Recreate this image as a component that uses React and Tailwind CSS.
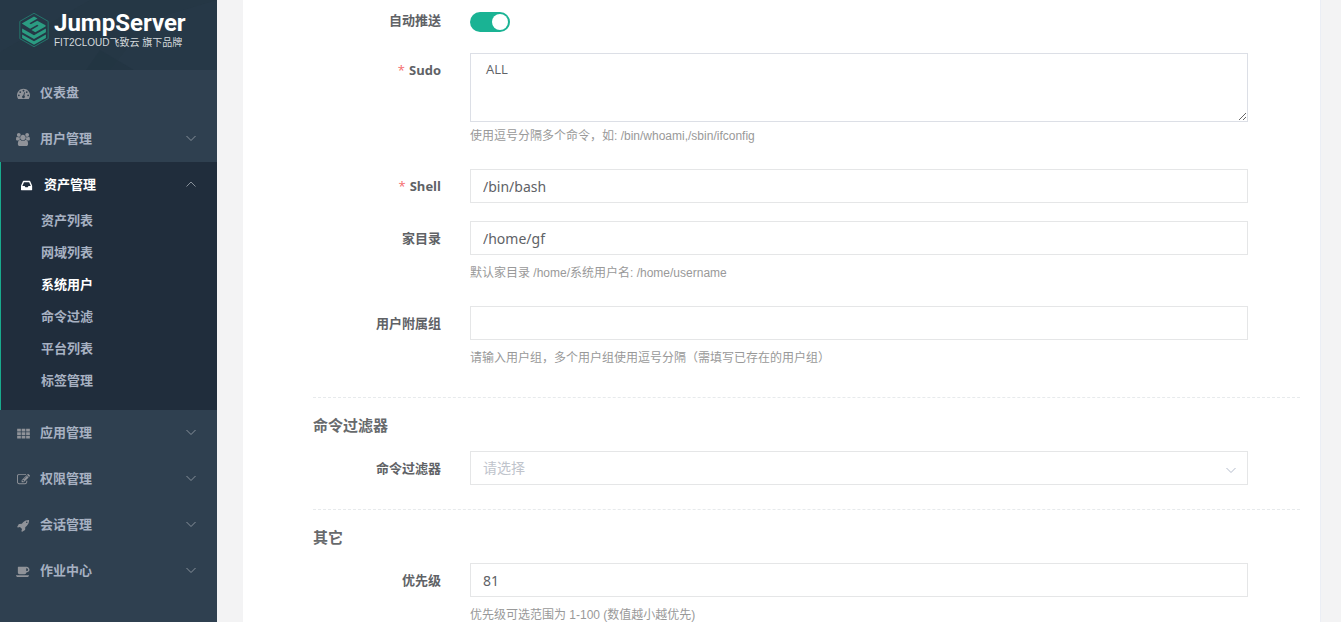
import React, { useState } from 'react';
import clsx from 'clsx';

const ICONS = {
    dashboard: {
        width: 1792,
        path: 'M384 1152q0-53-37.5-90.5t-90.5-37.5-90.5 37.5-37.5 90.5 37.5 90.5 90.5 37.5 90.5-37.5 37.5-90.5zm192-448q0-53-37.5-90.5t-90.5-37.5-90.5 37.5-37.5 90.5 37.5 90.5 90.5 37.5 90.5-37.5 37.5-90.5zm428 481l101-382q6-26-7.5-48.5t-38.5-29.5-48 6.5-30 39.5l-101 382q-60 5-107 43.5t-63 98.5q-20 77 20 146t117 89 146-20 89-117q16-60-6-117t-72-91zm660-33q0-53-37.5-90.5t-90.5-37.5-90.5 37.5-37.5 90.5 37.5 90.5 90.5 37.5 90.5-37.5 37.5-90.5zm-640-640q0-53-37.5-90.5t-90.5-37.5-90.5 37.5-37.5 90.5 37.5 90.5 90.5 37.5 90.5-37.5 37.5-90.5zm448 192q0-53-37.5-90.5t-90.5-37.5-90.5 37.5-37.5 90.5 37.5 90.5 90.5 37.5 90.5-37.5 37.5-90.5zm320 448q0 261-141 483-19 29-54 29h-1402q-35 0-54-29-141-221-141-483 0-182 71-348t191-286 286-191 348-71 348 71 286 191 191 286 71 348z',
    },
    users: {
        width: 1920,
        path: 'M593 896q-162 5-265 128h-134q-82 0-138-40.5t-56-118.5q0-353 124-353 6 0 43.5 21t97.5 42.5 119 21.5q67 0 133-23-5 37-5 66 0 139 81 256zm1071 637q0 120-73 189.5t-194 69.5h-874q-121 0-194-69.5t-73-189.5q0-53 3.5-103.5t14-109 26.5-108.5 43-97.5 62-81 85.5-53.5 111.5-20q10 0 43 21.5t73 48 107 48 135 21.5 135-21.5 107-48 73-48 43-21.5q61 0 111.5 20t85.5 53.5 62 81 43 97.5 26.5 108.5 14 109 3.5 103.5zm-1024-1277q0 106-75 181t-181 75-181-75-75-181 75-181 181-75 181 75 75 181zm704 384q0 159-112.5 271.5t-271.5 112.5-271.5-112.5-112.5-271.5 112.5-271.5 271.5-112.5 271.5 112.5 112.5 271.5zm576 225q0 78-56 118.5t-138 40.5h-134q-103-123-265-128 81-117 81-256 0-29-5-66 66 23 133 23 59 0 119-21.5t97.5-42.5 43.5-21q124 0 124 353zm-128-609q0 106-75 181t-181 75-181-75-75-181 75-181 181-75 181 75 75 181z',
    },
    inbox: {
        width: 1536,
        path: 'M1023 960h316q-1-3-2.5-8.5t-2.5-7.5l-212-496h-708l-212 496q-1 3-2.5 8.5t-2.5 7.5h316l95 192h320zm513 30v482q0 26-19 45t-45 19h-1408q-26 0-45-19t-19-45v-482q0-62 25-123l238-552q10-25 36.5-42t52.5-17h832q26 0 52.5 17t36.5 42l238 552q25 61 25 123z',
    },
    grid: {
        width: 1792,
        path: 'M20 240h510v370h-510zM640 240h510v370h-510zM1260 240h510v370h-510zM20 730h510v370h-510zM640 730h510v370h-510zM1260 730h510v370h-510zM20 1220h510v370h-510zM640 1220h510v370h-510zM1260 1220h510v370h-510z',
    },
    edit: {
        width: 1792,
        path: 'M888 1184l116-116-152-152-116 116v56h96v96h56zm440-720q-16-16-33 1l-350 350q-17 17-1 33t33-1l350-350q17-17 1-33zm80 594v190q0 119-84.5 203.5t-203.5 84.5h-832q-119 0-203.5-84.5t-84.5-203.5v-832q0-119 84.5-203.5t203.5-84.5h832q63 0 117 25 15 7 18 23 3 17-9 29l-49 49q-14 14-32 8-23-6-45-6h-832q-66 0-113 47t-47 113v832q0 66 47 113t113 47h832q66 0 113-47t47-113v-126q0-13 9-22l64-64q15-15 35-7t20 29zm-96-738l288 288-672 672h-288v-288zm444 132l-92 92-288-288 92-92q28-28 68-28t68 28l152 152q28 28 28 68t-28 68z',
    },
    rocket: {
        width: 1792,
        path: 'M1440 448q0-40-28-68t-68-28-68 28-28 68 28 68 68 28 68-28 28-68zm224-288q0 249-75.5 430.5t-253.5 360.5q-81 80-195 176l-20 379q-2 16-16 26l-384 224q-7 4-16 4-12 0-23-9l-64-64q-13-14-8-32l85-276-281-281-276 85q-3 1-9 1-14 0-23-9l-64-64q-17-19-5-39l224-384q10-14 26-16l379-20q96-114 176-195 188-187 358-258t431-71q14 0 24 9.5t10 22.5z',
    },
    coffee: {
        width: 1920,
        path: 'M1664 640q0-80-56-136t-136-56h-64v384h64q80 0 136-56t56-136zm-1664 768h1792q0 106-75 181t-181 75h-1280q-106 0-181-75t-75-181zm1856-768q0 159-112.5 271.5t-271.5 112.5h-64v32q0 92-66 158t-158 66h-704q-92 0-158-66t-66-158v-736q0-26 19-45t45-19h1152q159 0 271.5 112.5t112.5 271.5z',
    },
};

const MENU = [
    { label: '仪表盘', icon: 'dashboard' },
    { label: '用户管理', icon: 'users', expandable: true },
    {
        label: '资产管理',
        icon: 'inbox',
        expandable: true,
        children: ['资产列表', '网域列表', '系统用户', '命令过滤', '平台列表', '标签管理'],
    },
    { label: '应用管理', icon: 'grid', expandable: true },
    { label: '权限管理', icon: 'edit', expandable: true },
    { label: '会话管理', icon: 'rocket', expandable: true },
    { label: '作业中心', icon: 'coffee', expandable: true },
];

const MenuIcon = ({ name }) => (
    <span className="flex w-3.5 shrink-0 justify-center">
        <svg viewBox={`0 0 ${ICONS[name].width} 1792`} className="h-[13px] shrink-0 fill-current" aria-hidden="true">
            <path d={ICONS[name].path} />
        </svg>
    </span>
);

const Chevron = ({ up, className }) => (
    <svg viewBox="0 0 12 12" className={clsx('h-3 w-3 fill-none stroke-current', className)} aria-hidden="true">
        <path d={up ? 'M1.5 7.5 6 3 10.5 7.5' : 'M1.5 3 6 7.5 10.5 3'} />
    </svg>
);

const Logo = () => (
    <a href="#" className="relative flex h-[70px] items-start gap-1 overflow-hidden bg-[#253745] pt-2 pl-[18px] text-white">
        <svg viewBox="0 0 217 70" preserveAspectRatio="none" className="absolute inset-0 h-full w-full" aria-hidden="true">
            <path d="M0 52 90 0H0z" fill="#2a3d4c" opacity=".3" />
            <path d="M110 70 150 20 217 0v70z" fill="#2a3d4c" opacity=".3" />
            <path d="M100 50 134 70H86z" fill="#213341" opacity=".6" />
        </svg>
        <svg viewBox="0 0 96 112" className="relative mt-1 h-9 w-8 shrink-0" aria-hidden="true">
            <path d="M48 4 92 29v54L48 108 4 83V29z" fill="none" stroke="#23786d" strokeWidth="3" />
            <path d="M10 36 48 14 59 20 34 35 38 38 58 27 84 41 84 45 52 63 40 56 62 43 58 40 36 52z" fill="#2b9c82" />
            <path d="M11 51 48 72 85 51V63L48 84 11 63z" fill="#2b9c82" />
            <path d="M11 70 48 91 85 70V81L48 102 11 81z" fill="#2b9c82" />
        </svg>
        <span className="relative whitespace-nowrap">
            <span className="block font-[Roboto,sans-serif] text-2xl leading-[30px] font-bold">JumpServer</span>
            <span className="block font-['Liberation_Sans','Noto_Sans_CJK_SC',sans-serif] text-[10px] leading-[10px] text-[#d5dadd]">
                FIT2CLOUD飞致云 旗下品牌
            </span>
        </span>
    </a>
);

const SubMenu = ({ items, current, onSelect }) => (
    <ul className="flex flex-col gap-1.5 pb-4">
        {items.map((item) => (
            <li key={item}>
                <a
                    href="#"
                    onClick={() => onSelect(item)}
                    className={clsx('flex h-[26px] items-center pl-10 hover:text-white', item === current && 'text-white')}
                >
                    {item}
                </a>
            </li>
        ))}
    </ul>
);

const Sidebar = () => {
    const [current, setCurrent] = useState('系统用户');

    return (
        <aside className="w-[217px] shrink-0 bg-[#2f4050]">
            <Logo />
            <nav className="text-[13px] font-bold text-[#a7b1c2]">
                <ul>
                    {MENU.map((item) => (
                        <li key={item.label} className={clsx(item.children && 'border-l border-[#19aa8d] bg-[#202d3c]')}>
                            <button
                                type="button"
                                className={clsx(
                                    'flex h-[46px] w-full items-center gap-[10px] pr-5 text-left',
                                    item.children ? 'pl-[19px] text-white' : 'pl-4'
                                )}
                            >
                                <span className={item.children ? 'text-white' : 'text-[#909399]'}>
                                    <MenuIcon name={item.icon} />
                                </span>
                                <span className="flex-1">{item.label}</span>
                                {item.expandable && <Chevron up={Boolean(item.children)} className="text-[#87909a]" />}
                            </button>
                            {item.children && <SubMenu items={item.children} current={current} onSelect={setCurrent} />}
                        </li>
                    ))}
                </ul>
            </nav>
        </aside>
    );
};

const inputClass = "block h-[34px] w-full rounded-none border border-[#e5e6e7] bg-white px-3 font-['Noto_Sans','Noto_Sans_CJK_SC',sans-serif] text-sm outline-none focus:border-[#1ab394]";

const FormItem = ({ id, label, required, help, helpClass = 'pt-2', className, children }) => (
    <div className={clsx('flex items-start gap-[29px] pr-[52px]', className)}>
        <label htmlFor={id} className="w-32 shrink-0 text-right text-[13px] leading-[34px] font-bold text-[#606266]">
            {required && <span className="mr-1 font-normal text-[#f56c6c]">*</span>}
            {label}
        </label>
        <div className="min-w-0 flex-1">
            {children}
            {help && (
                <p className={clsx("font-['Liberation_Sans','Noto_Sans_CJK_SC',sans-serif] text-xs leading-5 text-[#999]", helpClass)}>
                    {help}
                </p>
            )}
        </div>
    </div>
);

const SectionTitle = ({ children }) => (
    <div className="mb-[14px] border-t border-dashed border-[#e7eaec] pt-[15px]">
        <h3 className="text-[15px] leading-6 font-bold text-[#676a6c]">{children}</h3>
    </div>
);

const SystemUserForm = () => {
    const [autoPush, setAutoPush] = useState(true);

    return (
        <form className="pt-[3px] pr-5 pl-[70px]">
            <FormItem id="auto_push" label="自动推送" className="mb-4">
                <div className="flex h-[34px] items-center pt-1">
                    <input
                        id="auto_push"
                        type="checkbox"
                        role="switch"
                        checked={autoPush}
                        onChange={(e) => setAutoPush(e.target.checked)}
                        className="flex h-5 w-10 appearance-none items-center rounded-full bg-[#dcdfe6] px-0.5 before:h-4 before:w-4 before:rounded-full before:bg-white checked:justify-end checked:bg-[#1ab394]"
                    />
                </div>
            </FormItem>
            <FormItem
                id="sudo"
                label="Sudo"
                required
                help="使用逗号分隔多个命令，如: /bin/whoami,/sbin/ifconfig"
                helpClass="pt-1"
                className="mb-[23px]"
            >
                <textarea
                    id="sudo"
                    defaultValue="ALL"
                    className="block h-[69px] w-full resize-y border border-[#dcdfe6] px-[15px] py-[5px] text-[13px] leading-5 text-[#606266] outline-none focus:border-[#1ab394]"
                />
            </FormItem>
            <FormItem id="shell" label="Shell" required className="mb-[18px]">
                <input id="shell" type="text" defaultValue="/bin/bash" className={clsx(inputClass, 'text-[#606266]')} />
            </FormItem>
            <FormItem id="home" label="家目录" help="默认家目录 /home/系统用户名: /home/username" className="mb-[23px]">
                <input id="home" type="text" defaultValue="/home/gf" className={clsx(inputClass, 'text-[#606266]')} />
            </FormItem>
            <FormItem
                id="groups"
                label="用户附属组"
                help="请输入用户组，多个用户组使用逗号分隔（需填写已存在的用户组）"
                className="mb-[29px]"
            >
                <input id="groups" type="text" className={clsx(inputClass, 'text-[#606266]')} />
            </FormItem>

            <SectionTitle>命令过滤器</SectionTitle>
            <FormItem id="cmd_filters" label="命令过滤器" className="mb-6">
                <div className="relative">
                    <select id="cmd_filters" className={clsx(inputClass, 'appearance-none text-[#c0c4cc]')}>
                        <option>请选择</option>
                    </select>
                    <Chevron className="pointer-events-none absolute top-3.5 right-[11px] text-[#b4bccc]" />
                </div>
            </FormItem>

            <SectionTitle>其它</SectionTitle>
            <FormItem id="priority" label="优先级" help="优先级可选范围为 1-100 (数值越小越优先)" className="mb-6">
                <input id="priority" type="text" defaultValue="81" className={clsx(inputClass, 'text-[#606266]')} />
            </FormItem>
        </form>
    );
};

const App = () => {
    return (
        <div className="flex h-screen overflow-hidden bg-[#f3f3f4] font-['Open_Sans','Noto_Sans_CJK_SC',sans-serif]">
            <Sidebar />
            <main className="flex-1 overflow-y-auto pr-5 pl-[26px] [scrollbar-width:none]">
                <div className="min-h-full border-r border-[#ebeef5] bg-white">
                    <SystemUserForm />
                </div>
            </main>
        </div>
    );
};

export default App;
